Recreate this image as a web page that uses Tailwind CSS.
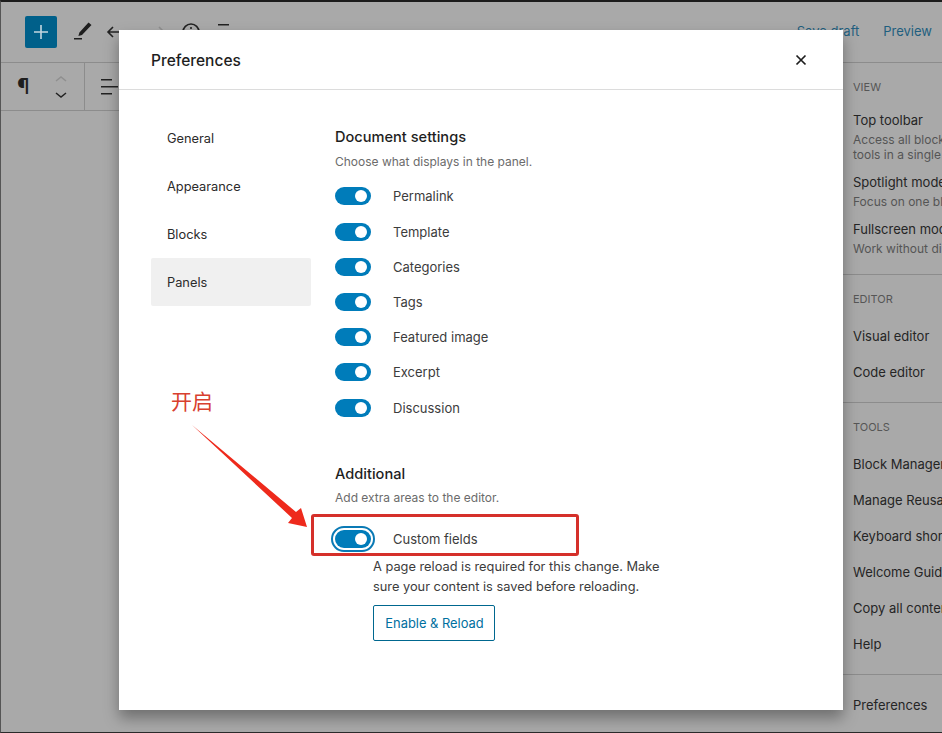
<!DOCTYPE html>
<html lang="en">
<head>
  <meta charset="UTF-8">
  <title>Preferences</title>
  <script src="https://cdn.jsdelivr.net/npm/@tailwindcss/browser@4"></script>
</head>
<body class="bg-[#a9a9a9] font-['Inter','Noto_Sans_CJK_SC',sans-serif] text-[13px] text-[#252525]">
<div class="relative flex h-[733px] w-[942px] flex-col overflow-hidden border-t-2 border-b border-l border-t-[#1c1c1c] border-b-[#2a2a2a] border-l-[#555]">

  <!-- Editor behind the modal -->
  <header class="flex h-[61px] shrink-0 items-center border-b border-[#8c8c8c] pr-[10px]">
    <div class="ml-[24px] flex h-8 w-8 items-center justify-center rounded-[2px] bg-[#00608a]">
      <svg width="18" height="18" viewBox="0 0 18 18" fill="none" stroke="#c4d6df" stroke-width="1.6"><path d="M9 2v14M2 9h14"/></svg>
    </div>
    <svg class="ml-[16px] -mt-[2px]" width="20" height="20" viewBox="0 0 20 20" fill="#1e1e1e"><path d="M15.5 1.5l3 2.6L9 14l-3.6 1 1-3.6zM1 17h8v1.6H1z"/></svg>
    <svg class="ml-[12px]" width="20" height="20" viewBox="0 0 20 20" fill="none" stroke="#222" stroke-width="1.6"><path d="M19 10H3M8 5l-5 5 5 5"/></svg>
    <svg class="ml-[22px]" width="20" height="20" viewBox="0 0 20 20" fill="none" stroke="#8f8f8f" stroke-width="1.6"><path d="M1 10h16M12 5l5 5-5 5"/></svg>
    <svg class="ml-[14px]" width="20" height="20" viewBox="0 0 20 20" fill="none" stroke="#222" stroke-width="1.6"><circle cx="10" cy="10" r="8"/><path d="M10 5v2M10 9v6"/></svg>
    <svg class="ml-[12px]" width="20" height="20" viewBox="0 0 20 20" fill="#222"><path d="M5 2h11v1.6H5zM5 9h11v1.6H5zM5 16h11v1.6H5z"/></svg>
    <div class="ml-auto flex items-center gap-6 text-[#1f5f7f]">
      <span>Save draft</span>
      <span>Preview</span>
    </div>
  </header>

  <div class="flex min-h-0 flex-1">
    <main class="min-w-0 flex-1">
      <div class="flex h-[48px] items-center border-b border-[#8c8c8c]">
        <div class="flex h-full w-[84px] shrink-0 items-center border-r border-[#8c8c8c] pl-[16px]">
          <span class="w-[35px] text-[21px] leading-none font-medium text-[#1e1e1e]">¶</span>
          <svg width="18" height="28" viewBox="0 0 18 28" fill="none" stroke-width="1.5"><path d="M4 8l5-4 5 4" stroke="#8f8f8f"/><path d="M4 20l5 4 5-4" stroke="#222"/></svg>
        </div>
        <svg class="ml-[15px]" width="20" height="20" viewBox="0 0 20 20" fill="#222"><path d="M1 2h11v1.6H1zM1 9h17v1.6H1zM1 16h11v1.6H1z"/></svg>
      </div>
    </main>

    <!-- Settings menu, mostly cut off by the window -->
    <aside class="w-[99px] shrink-0 overflow-hidden whitespace-nowrap pl-[10px]">
      <div class="mt-[6px] flex h-9 items-center text-[11px] text-[#565656]">VIEW</div>
      <div class="mt-[5px] leading-5">Top toolbar</div>
      <div class="mt-[2px] text-[12px] leading-[15px] text-[#555]">Access all block and document<br>tools in a single place</div>
      <div class="mt-[10px] leading-5">Spotlight mode</div>
      <div class="mt-[2px] text-[12px] leading-[15px] text-[#555]">Focus on one block at a time</div>
      <div class="mt-[10px] leading-5">Fullscreen mode</div>
      <div class="mt-[2px] text-[12px] leading-[15px] text-[#555]">Work without distraction</div>
      <div class="mt-[18px] -ml-[10px] border-t border-[#8c8c8c]"></div>
      <div class="mt-[6px] flex h-9 items-center text-[11px] text-[#565656]">EDITOR</div>
      <div class="mt-[2px] flex h-9 items-center">Visual editor</div>
      <div class="flex h-9 items-center">Code editor</div>
      <div class="mt-[11px] -ml-[10px] border-t border-[#8c8c8c]"></div>
      <div class="mt-[6px] flex h-9 items-center text-[11px] text-[#565656]">TOOLS</div>
      <div class="mt-[2px] flex h-9 items-center">Block Manager</div>
      <div class="flex h-9 items-center">Manage Reusable blocks</div>
      <div class="flex h-9 items-center">Keyboard shortcuts</div>
      <div class="flex h-9 items-center">Welcome Guide</div>
      <div class="flex h-9 items-center">Copy all content</div>
      <div class="flex h-9 items-center">Help</div>
      <div class="mt-[11px] -ml-[10px] border-t border-[#8c8c8c]"></div>
      <div class="mt-[13px] flex h-9 items-center">Preferences</div>
    </aside>
  </div>

  <!-- Preferences modal -->
  <div class="absolute top-[28px] left-[118px] h-[680px] w-[724px] bg-white shadow-[0_8px_14px_rgba(0,0,0,0.35)]">
    <div class="flex h-[60px] items-center justify-between border-b border-[#dcdcdc] pt-[3px] pr-[36px] pl-[32px]">
      <h1 class="text-[15.5px] font-medium text-[#1e1e1e]">Preferences</h1>
      <svg class="-mt-[2px]" width="12" height="12" viewBox="0 0 12 12" fill="none" stroke="#1e1e1e" stroke-width="1.7"><path d="M1.5 1.5l9 9M10.5 1.5l-9 9"/></svg>
    </div>
    <div class="flex gap-6 pt-[24px] pl-[32px]">
      <nav class="w-[160px] shrink-0 text-[12.8px] text-[#2b2b2b]">
        <div class="flex h-12 items-center pt-0.5 pl-4">General</div>
        <div class="flex h-12 items-center pt-0.5 pl-4">Appearance</div>
        <div class="flex h-12 items-center pt-0.5 pl-4">Blocks</div>
        <div class="flex h-12 items-center rounded-[2px] bg-[#f0f0f0] pt-0.5 pl-4">Panels</div>
      </nav>
      <section class="relative flex-1">
        <h2 class="mt-[13px] text-[14.6px] leading-5 font-medium text-[#1e1e1e]">Document settings</h2>
        <p class="mt-[6px] text-[12px] leading-[18px] text-[#6b6b6b]">Choose what displays in the panel.</p>
        <div class="mt-[7.8px] flex flex-col text-[#3c3c3c]">
          <div class="flex h-[35.2px] items-center"><span class="flex h-[18px] w-9 items-center justify-end rounded-full bg-[#007cba] pr-1"><span class="h-3 w-3 rounded-full bg-white"></span></span><span class="ml-[22px]">Permalink</span></div>
          <div class="flex h-[35.2px] items-center"><span class="flex h-[18px] w-9 items-center justify-end rounded-full bg-[#007cba] pr-1"><span class="h-3 w-3 rounded-full bg-white"></span></span><span class="mt-0.5 ml-[22px]">Template</span></div>
          <div class="flex h-[35.2px] items-center"><span class="flex h-[18px] w-9 items-center justify-end rounded-full bg-[#007cba] pr-1"><span class="h-3 w-3 rounded-full bg-white"></span></span><span class="mt-0.5 ml-[22px]">Categories</span></div>
          <div class="flex h-[35.2px] items-center"><span class="flex h-[18px] w-9 items-center justify-end rounded-full bg-[#007cba] pr-1"><span class="h-3 w-3 rounded-full bg-white"></span></span><span class="mt-0.5 ml-[22px]">Tags</span></div>
          <div class="flex h-[35.2px] items-center"><span class="flex h-[18px] w-9 items-center justify-end rounded-full bg-[#007cba] pr-1"><span class="h-3 w-3 rounded-full bg-white"></span></span><span class="mt-0.5 ml-[22px]">Featured image</span></div>
          <div class="flex h-[35.2px] items-center"><span class="flex h-[18px] w-9 items-center justify-end rounded-full bg-[#007cba] pr-1"><span class="h-3 w-3 rounded-full bg-white"></span></span><span class="ml-[22px]">Excerpt</span></div>
          <div class="flex h-[35.2px] items-center"><span class="flex h-[18px] w-9 items-center justify-end rounded-full bg-[#007cba] pr-1"><span class="h-3 w-3 rounded-full bg-white"></span></span><span class="mt-0.5 ml-[22px]">Discussion</span></div>
        </div>
        <h2 class="mt-[39px] text-[14.6px] leading-5 font-medium text-[#1e1e1e]">Additional</h2>
        <p class="mt-[5px] text-[12px] leading-[18px] text-[#6b6b6b]">Add extra areas to the editor.</p>
        <div class="mt-[19.8px] flex h-[24px] items-center text-[#3c3c3c]">
          <span class="flex h-[18px] w-9 items-center justify-end rounded-full bg-[#007cba] pr-1 outline-2 outline-offset-[2px] outline-[#0a7ab5]"><span class="h-3 w-3 rounded-full bg-white"></span></span>
          <span class="mt-0.5 ml-[22px]">Custom fields</span>
        </div>
        <p class="mt-[6px] ml-[38px] w-[300px] text-[12.8px] leading-5 text-[#3c3c3c]">A page reload is required for this change. Make sure your content is saved before reloading.</p>
        <button class="mt-[8px] ml-[38px] h-9 w-[122px] rounded-[2px] border border-[#00678f] pt-0.5 pl-px text-[12.9px] text-[#00709f]">Enable &amp; Reload</button>
      </section>
    </div>
  </div>

  <!-- Red annotation drawn over the screenshot -->
  <div class="absolute top-[389px] left-[170px] text-[21px] leading-none text-[#d8402f]">开启</div>
  <svg class="absolute top-[-2px] left-[-1px]" width="942" height="733" viewBox="0 0 942 733" fill="none">
    <polygon points="192,425 296,512 301,508 307,527 288,523 292,518" fill="#ee2a1c"/>
    <rect x="312.5" y="515.5" width="265" height="39" rx="1.5" stroke="#d5302a" stroke-width="3"/>
  </svg>
</div>
</body>
</html>
